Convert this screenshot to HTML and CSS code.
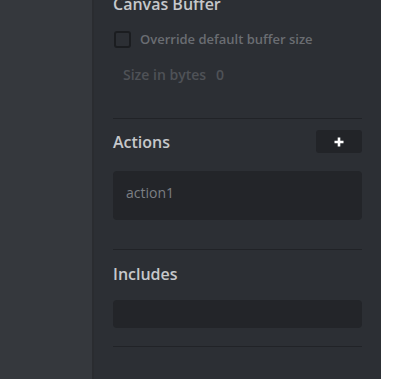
FILE: index.html
```html
<!DOCTYPE html>
<html>
<head>
<meta charset="utf-8">
<link rel="stylesheet" href="styles.css">
</head>
<body>
<div class="app">
  <div class="sidebar"></div>
  <div class="panel">
    <div class="content">
      <div class="title">Canvas Buffer</div>
      <label class="check-row">
        <span class="checkbox"></span>
        <span class="check-label">Override default buffer size</span>
      </label>
      <div class="size-row">
        <span>Size in bytes</span>
        <span>0</span>
      </div>
      <div class="divider div1"></div>
      <div class="section-head">
        <div class="title">Actions</div>
        <button class="add-btn">
          <svg width="12" height="12" viewBox="0 0 12 12"><path d="M6 1.5v9M1.5 6h9" stroke="#fff" stroke-width="2.6" stroke-linecap="butt"/></svg>
        </button>
      </div>
      <div class="list-box actions-box">action1</div>
      <div class="divider div2"></div>
      <div class="title includes-title">Includes</div>
      <div class="list-box includes-box"></div>
      <div class="divider div3"></div>
    </div>
  </div>
</div>
</body>
</html>
```

FILE: styles.css
```css
html, body {
  margin: 0;
  padding: 0;
  background: #ffffff;
}
body {
  font-family: "Open Sans", "Noto Sans", sans-serif;
  overflow: hidden;
}
.app {
  display: flex;
  width: 381px;
  height: 379px;
}
.sidebar {
  width: 92px;
  background: #35383d;
  border-right: 2px solid #2a2c30;
}
.panel {
  flex: 1;
  background: #2c2f34;
  padding: 0 19px;
  overflow: hidden;
}
.content {
  display: flex;
  flex-direction: column;
  margin-top: -7px;
}
.title {
  font-size: 16px;
  font-weight: 600;
  line-height: 22px;
  color: #c6c8cb;
}
.check-row {
  display: flex;
  align-items: center;
  margin-top: 16px;
  height: 16px;
}
.checkbox {
  box-sizing: border-box;
  width: 17px;
  height: 17px;
  margin-left: 1px;
  border: 2px solid #1b1d20;
  border-radius: 3px;
}
.check-label {
  margin-left: 9px;
  font-size: 13px;
  font-weight: 600;
  color: #6a6d72;
}
.size-row {
  display: flex;
  gap: 10px;
  margin-top: 18px;
  padding-left: 10px;
  font-size: 14px;
  font-weight: 600;
  line-height: 20px;
  color: #4f5257;
}
.divider {
  height: 1px;
  background: #212327;
}
.div1 { margin-top: 33px; }
.div2 { margin-top: 29px; }
.div3 { margin-top: 18px; }
.section-head {
  display: flex;
  justify-content: space-between;
  align-items: center;
  margin-top: 11px;
  height: 23px;
}
.add-btn {
  width: 46px;
  height: 23px;
  border: none;
  border-radius: 3px;
  background: #222428;
  display: flex;
  align-items: center;
  justify-content: center;
  padding: 0;
}
.add-btn svg { display: block; }
.list-box {
  background: #232529;
  border-radius: 4px;
  box-sizing: border-box;
}
.actions-box {
  margin-top: 18px;
  height: 49px;
  padding-left: 13px;
  display: flex;
  align-items: center;
  font-size: 14px;
  color: #7c7f84;
  padding-bottom: 6px;
}
.includes-title { margin-top: 13px; }
.includes-box {
  margin-top: 15px;
  height: 28px;
}
```
